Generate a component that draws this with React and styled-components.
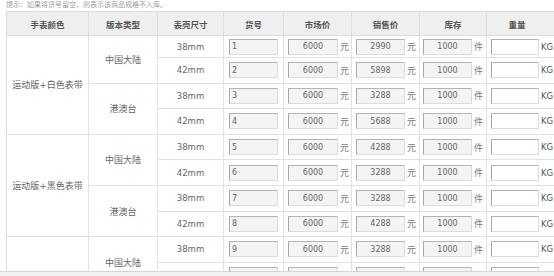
import React from "react";
import styled, { createGlobalStyle } from "styled-components";

const GlobalStyle = createGlobalStyle`
  html, body {
    margin: 0;
    padding: 0;
    background: #fff;
    overflow: hidden;
  }
  body {
    font-family: "DejaVu Sans", "Noto Sans CJK SC", sans-serif;
    color: #666;
  }
`;

// each version holds its rows: [size, code, sale price]
const groups = [
  {
    color: "运动版+白色表带",
    versions: [
      { name: "中国大陆", rows: [["38mm", "1", "2990"], ["42mm", "2", "5898"]] },
      { name: "港澳台", rows: [["38mm", "3", "3288"], ["42mm", "4", "5688"]] },
    ],
  },
  {
    color: "运动版+黑色表带",
    versions: [
      { name: "中国大陆", rows: [["38mm", "5", "4288"], ["42mm", "6", "3288"]] },
      { name: "港澳台", rows: [["38mm", "7", "3288"], ["42mm", "8", "4288"]] },
    ],
  },
  {
    color: "运动版+红色表带",
    versions: [
      { name: "中国大陆", rows: [["38mm", "9", "3288"], ["42mm", "10", "3288"]] },
    ],
  },
];

const headers = ["手表颜色", "版本类型", "表壳尺寸", "货号", "市场价", "销售价", "库存", "重量"];

function App() {
  return (
    <>
      <GlobalStyle />
      <Page>
        <Scroller>
          <Hint>提示：如果将货号留空，则表示该商品规格不入库。</Hint>
          <Grid>
            {headers.map((h, i) => (
              <Head key={h} $last={i === headers.length - 1}>
                {h}
              </Head>
            ))}
            {groups.map((g) => (
              <React.Fragment key={g.color}>
                <SpanCell $span={4}>{g.color}</SpanCell>
                {g.versions.map((v) => (
                  <React.Fragment key={v.name}>
                    <SpanCell $span={2}>{v.name}</SpanCell>
                    {v.rows.map(([size, code, sale]) => (
                      <React.Fragment key={code}>
                        <Cell $center>{size}</Cell>
                        <InputCell $pad={5}>
                          <CodeInput defaultValue={code} />
                        </InputCell>
                        <InputCell>
                          <NumInput defaultValue="6000" />
                          <Unit>元</Unit>
                        </InputCell>
                        <InputCell>
                          <NumInput $w={49} defaultValue={sale} />
                          <Unit>元</Unit>
                        </InputCell>
                        <InputCell $pad={3}>
                          <NumInput $w={49} defaultValue="1000" />
                          <Unit>件</Unit>
                        </InputCell>
                        <InputCell>
                          <WeightInput />
                          <Unit $latin>KG</Unit>
                        </InputCell>
                      </React.Fragment>
                    ))}
                  </React.Fragment>
                ))}
              </React.Fragment>
            ))}
          </Grid>
        </Scroller>
        <ScrollTrack />
      </Page>
    </>
  );
}

export default App;

const Page = styled.div`
  display: flex;
  flex-direction: column;
  height: 276px;
  width: 554px;
  overflow: hidden;
`;

const Scroller = styled.div`
  flex: 1;
  overflow: hidden;
`;

const ScrollTrack = styled.div`
  height: 4px;
  border-top: 1px solid #d4d4d4;
  background: #f0f0f0;
`;

const Hint = styled.div`
  height: 11px;
  line-height: 10px;
  padding-left: 6px;
  font-size: 7px;
  color: #a0a0a0;
  white-space: nowrap;
`;

const Grid = styled.div`
  display: grid;
  grid-template-columns: 82px 69px 66px 60px 68px 68px 67px 73px;
  grid-template-rows: 24px 22px repeat(10, 25.6px);
  width: max-content;
  margin-left: 6px;
  border-top: 1px solid #dcdcdc;
  border-left: 1px solid #dcdcdc;
`;

const Cell = styled.div`
  box-sizing: border-box;
  display: flex;
  align-items: center;
  justify-content: ${(p) => (p.$center ? "center" : "flex-start")};
  border-right: 1px solid #e2e2e2;
  border-bottom: 1px solid #e2e2e2;
  font-size: 8.5px;
  color: #666;
  white-space: nowrap;
`;

const Head = styled(Cell)`
  justify-content: center;
  padding-right: ${(p) => (p.$last ? "12px" : "0")};
  background: #efefef;
  border-color: #dcdcdc;
  color: #555;
  font-weight: bold;
`;

const SpanCell = styled(Cell)`
  grid-row: span ${(p) => p.$span};
  justify-content: center;
  font-size: 9px;
`;

const InputCell = styled(Cell)`
  padding-left: ${(p) => p.$pad ?? 4}px;
  gap: 2px;
`;

const BaseInput = styled.input`
  box-sizing: border-box;
  height: 16px;
  margin: 0;
  padding: 0 2px;
  border: 1px solid #dcdcdc;
  border-top-color: #b4b4b4;
  border-left-color: #a8a8a8;
  background: #f4f4f4;
  font-family: "DejaVu Sans", sans-serif;
  font-size: 8px;
  color: #666;
  outline: none;
`;

const CodeInput = styled(BaseInput)`
  width: 49px;
  text-align: left;
`;

const NumInput = styled(BaseInput)`
  width: ${(p) => p.$w ?? 50}px;
  text-align: center;
`;

const WeightInput = styled(BaseInput)`
  width: 48px;
  background: #fff;
`;

const Unit = styled.span`
  font-size: ${(p) => (p.$latin ? "8.5px" : "9px")};
  color: ${(p) => (p.$latin ? "#555" : "#777")};
`;
